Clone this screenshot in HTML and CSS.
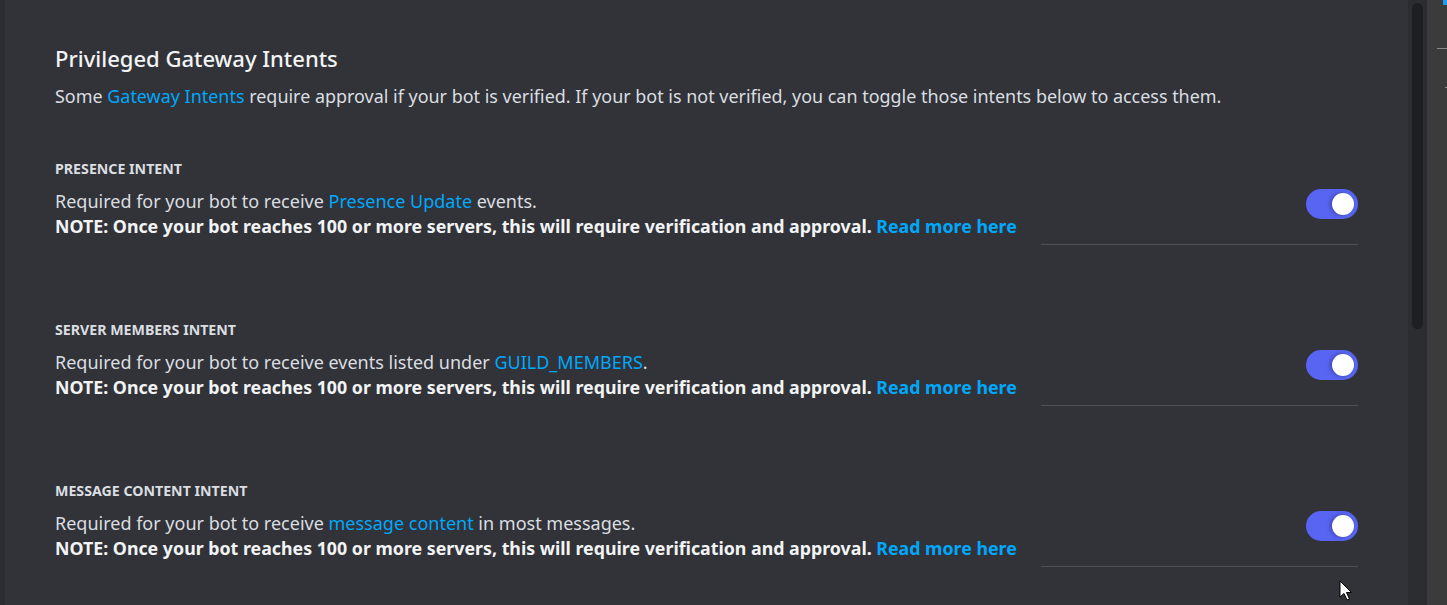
FILE: index.html
```html
<!DOCTYPE html>
<html lang="en">
<head>
<meta charset="utf-8">
<title>Privileged Gateway Intents</title>
<link rel="stylesheet" href="styles.css">
</head>
<body>
<div class="app">
  <div class="edge"></div>
  <main class="main">
    <h2 class="title">Privileged Gateway Intents</h2>
    <p class="desc">Some <a class="link" href="#">Gateway Intents</a> require approval if your bot is verified. If your bot is not verified, you can toggle those intents below to access them.</p>

    <section class="intent">
      <div class="label">PRESENCE INTENT</div>
      <div class="row">
        <div class="text">
          <div class="line">Required for your bot to receive <a class="link" href="#">Presence Update</a> events.</div>
          <div class="line note">NOTE: Once your bot reaches 100 or more servers, this will require verification and approval. <a class="link" href="#">Read more here</a></div>
        </div>
        <div class="switch"><span class="knob"></span></div>
      </div>
      <div class="divider"></div>
    </section>

    <section class="intent">
      <div class="label">SERVER MEMBERS INTENT</div>
      <div class="row">
        <div class="text">
          <div class="line">Required for your bot to receive events listed under <a class="link" href="#">GUILD_MEMBERS</a>.</div>
          <div class="line note">NOTE: Once your bot reaches 100 or more servers, this will require verification and approval. <a class="link" href="#">Read more here</a></div>
        </div>
        <div class="switch"><span class="knob"></span></div>
      </div>
      <div class="divider"></div>
    </section>

    <section class="intent">
      <div class="label">MESSAGE CONTENT INTENT</div>
      <div class="row">
        <div class="text">
          <div class="line">Required for your bot to receive <a class="link" href="#">message content</a> in most messages.</div>
          <div class="line note">NOTE: Once your bot reaches 100 or more servers, this will require verification and approval. <a class="link" href="#">Read more here</a></div>
        </div>
        <div class="switch"><span class="knob"></span></div>
      </div>
      <div class="divider"></div>
    </section>

    <svg class="cursor" width="14" height="22" viewBox="0 0 14 22"><path d="M1 1 L1 17 L5 13.5 L8 20 L10.5 19 L7.5 12.5 L12.5 12.5 Z" fill="#ffffff" stroke="#000000" stroke-width="1" stroke-linejoin="miter"/></svg>
  </main>
  <div class="track"><div class="thumb"></div></div>
  <div class="side">
    <div class="side-blue"></div>
    <div class="side-line"></div>
    <div class="side-mark"></div>
  </div>
</div>
</body>
</html>
```

FILE: styles.css
```css
html, body {
  margin: 0;
  padding: 0;
  height: 100%;
  overflow: hidden;
  background: #313338;
}
.app {
  display: flex;
  height: 605px;
  font-family: "Noto Sans", "Open Sans", sans-serif;
}
.edge {
  width: 5px;
  flex: none;
  background: #2b2d31;
}
.main {
  position: relative;
  flex: 1;
  background: #313338;
  padding: 43px 50px 0 50px;
  box-sizing: border-box;
  min-width: 0;
}
.title {
  margin: 0;
  font-size: 22px;
  line-height: 30px;
  font-weight: 500;
  color: #f2f3f5;
}
.desc {
  margin: 11px 0 0;
  font-size: 17.95px;
  line-height: 25px;
  color: #dbdee1;
}
.link {
  color: #00a8fc;
  text-decoration: none;
}
.intent {
  margin-top: 51px;
}
.intent + .intent {
  margin-top: 76px;
}
.label {
  font-size: 14.2px;
  line-height: 18px;
  font-weight: 700;
  color: #dbdee1;
}
.row {
  display: flex;
  align-items: flex-start;
  justify-content: space-between;
  margin-top: 11px;
}
.line {
  font-size: 18px;
  line-height: 25px;
  color: #dbdee1;
  white-space: nowrap;
}
.note {
  font-size: 17.8px;
  font-weight: 700;
  color: #f2f3f5;
}
.switch {
  flex: none;
  width: 52px;
  height: 30px;
  border-radius: 15px;
  background: #5865f2;
  display: flex;
  align-items: center;
  justify-content: flex-end;
  padding-right: 4px;
  box-sizing: border-box;
}
.knob {
  width: 22px;
  height: 22px;
  border-radius: 50%;
  background: #ffffff;
  box-shadow: -2px 0 4px rgba(20, 20, 60, 0.35);
}
.divider {
  height: 1px;
  width: 317px;
  margin-left: auto;
  margin-top: 5px;
  background: #4e5058;
}
.cursor {
  position: absolute;
  left: 1334px;
  top: 580px;
}
.track {
  width: 19px;
  flex: none;
  background: #2b2d31;
  padding: 3px 4px 0;
  box-sizing: border-box;
}
.thumb {
  height: 326px;
  border-radius: 6px;
  background: #1e1f22;
}
.side {
  position: relative;
  width: 20px;
  flex: none;
  background: #3b3b3c;
}
.side-blue {
  position: absolute;
  right: 0;
  top: 0;
  width: 4px;
  height: 5px;
  background: #1a9ff0;
}
.side-line {
  position: absolute;
  right: 0;
  top: 48px;
  width: 10px;
  height: 1px;
  background: #8a8a8a;
}
.side-mark {
  position: absolute;
  right: 0;
  top: 87px;
  width: 2px;
  height: 1px;
  background: #8a8a8a;
}
```
